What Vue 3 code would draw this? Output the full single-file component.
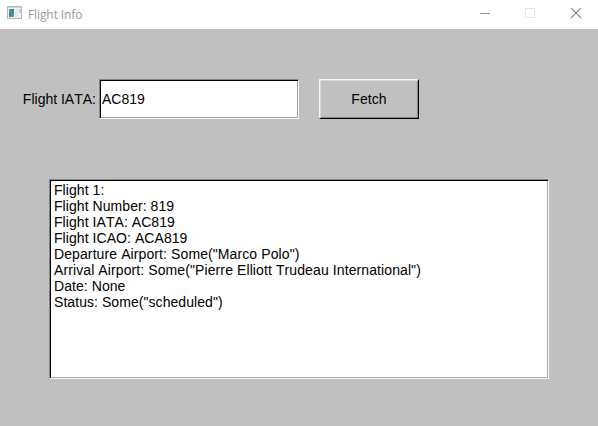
<script setup>
import { ref } from 'vue'

const code = ref('AC819')
const lines = [
  'Flight 1:',
  'Flight Number: 819',
  'Flight IATA: AC819',
  'Flight ICAO: ACA819',
  'Departure Airport: Some("Marco Polo")',
  'Arrival Airport: Some("Pierre Elliott Trudeau International")',
  'Date: None',
  'Status: Some("scheduled")',
]
</script>

<template>
  <div class="window">
    <header class="titlebar">
      <svg class="app-icon" width="16" height="14" viewBox="0 0 16 14" shape-rendering="crispEdges">
        <defs>
          <linearGradient id="pane" x1="0" y1="0" x2="1" y2="1">
            <stop offset="0" stop-color="#5b8fb8" />
            <stop offset="0.5" stop-color="#3f8596" />
            <stop offset="1" stop-color="#66b27c" />
          </linearGradient>
        </defs>
        <rect x="0" y="0" width="15" height="13" fill="#b4b7b9" />
        <rect x="1" y="1" width="13" height="1" fill="#cfd2d4" />
        <rect x="1" y="2" width="13" height="10" fill="#f2f3f4" />
        <rect x="2" y="3" width="5" height="8" fill="url(#pane)" />
        <rect x="8" y="3" width="3" height="8" fill="#e2e7e9" />
        <rect x="12" y="3" width="2" height="4" fill="#b9d6c3" />
      </svg>
      <span class="title">Flight Info</span>
      <div class="controls">
        <svg width="45" height="29" viewBox="0 0 45 29">
          <path d="M18 13.5h10" stroke="#999" fill="none" />
        </svg>
        <svg width="45" height="29" viewBox="0 0 45 29">
          <rect x="18.5" y="8.5" width="9" height="9" stroke="#e6e6e6" fill="none" />
        </svg>
        <svg width="46" height="29" viewBox="0 0 46 29">
          <path d="M19 8l10 10M29 8l-10 10" stroke="#8c8c8c" stroke-width="1.1" fill="none" />
        </svg>
      </div>
    </header>
    <main class="body">
      <div class="form">
        <label class="label" for="iata">Flight IATA:</label>
        <input id="iata" v-model="code" class="sunken field" type="text" />
        <button class="fetch" type="button">Fetch</button>
      </div>
      <div class="sunken output">
        <div v-for="line in lines" :key="line" class="line" :class="{ airport: line.includes('Airport') }">{{ line }}</div>
      </div>
    </main>
  </div>
</template>

<style>
body {
  background: #c0c0c0;
}
</style>

<style scoped>
.window {
  width: 598px;
  height: 426px;
  overflow: hidden;
  background: #c0c0c0;
  color: #000;
  font-family: "Liberation Sans", Arial, sans-serif;
  font-size: 14px;
  font-kerning: none;
}
.titlebar {
  display: flex;
  box-sizing: border-box;
  height: 29px;
  padding-left: 7px;
  background: #fff;
}
.app-icon {
  margin-top: 6px;
}
.title {
  margin-left: 5px;
  color: #999;
  font: 12px/29px "Open Sans", "Noto Sans", sans-serif;
  letter-spacing: -0.1px;
}
.controls {
  display: flex;
  margin-left: auto;
}
.body {
  padding-top: 50px;
}
.form {
  display: flex;
  align-items: center;
  height: 40px;
}
.label {
  width: 96px;
  margin-right: 3px;
  text-align: right;
  white-space: nowrap;
}
.sunken {
  box-sizing: border-box;
  border: 1px solid;
  border-color: #858585 #f6f6f6 #f6f6f6 #858585;
  background: #fff;
  box-shadow: inset 1px 1px #000, inset -1px -1px #aaa;
}
.field {
  width: 200px;
  height: 40px;
  margin: 0;
  padding: 0 2px;
  border-radius: 0;
  outline: none;
  color: inherit;
  font: inherit;
  font-kerning: none;
}
.fetch {
  width: 100px;
  height: 40px;
  margin: 0 0 0 20px;
  padding: 0;
  border: 1px solid;
  border-color: #f6f6f6 #000 #000 #f6f6f6;
  border-radius: 0;
  background: #c0c0c0;
  box-shadow: inset 1px 1px #d8d8d8, inset -1px -1px #858585;
  color: inherit;
  font: inherit;
  letter-spacing: 0.1px;
}
.output {
  width: 500px;
  height: 200px;
  margin: 60px 0 0 49px;
  padding: 2px 4px;
}
.line {
  height: 16px;
  line-height: 16px;
  letter-spacing: 0.06px;
  white-space: nowrap;
}
.airport {
  letter-spacing: 0.1px;
}
</style>
